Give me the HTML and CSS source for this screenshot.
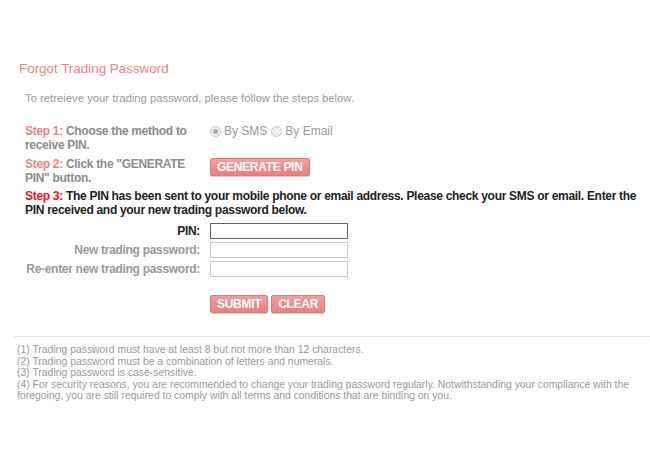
FILE: index.html
```html
<!DOCTYPE html>
<html>
<head>
<meta charset="utf-8">
<link rel="stylesheet" href="styles.css">
</head>
<body>
<div class="page">
  <h1 class="title">Forgot Trading Password</h1>
  <p class="intro">To retreieve your trading password, please follow the steps below.</p>
  <div class="steps">
    <div class="step-label"><span class="step-no">Step 1:</span> Choose the method to receive PIN.</div>
    <div class="step-ctl radios">
      <label class="radio"><span class="dot on"></span>By SMS</label>
      <label class="radio"><span class="dot"></span>By Email</label>
    </div>
    <div class="step-label"><span class="step-no">Step 2:</span> Click the "GENERATE PIN" button.</div>
    <div class="step-ctl"><button class="btn">GENERATE PIN</button></div>
  </div>
  <div class="step3"><span class="step3-no">Step 3:</span> The PIN has been sent to your mobile phone or email address. Please check your SMS or email. Enter the PIN received and your new trading password below.</div>
  <div class="form">
    <div class="flabel dark">PIN:</div>
    <div class="input active"></div>
    <div class="flabel">New trading password:</div>
    <div class="input"></div>
    <div class="flabel">Re-enter new trading password:</div>
    <div class="input"></div>
  </div>
  <div class="actions">
    <button class="btn">SUBMIT</button>
    <button class="btn">CLEAR</button>
  </div>
  <div class="notes">
    <div>(1) Trading password must have at least 8 but not more than 12 characters.</div>
    <div>(2) Trading password must be a combination of letters and numerals.</div>
    <div>(3) Trading password is case-sensitive.</div>
    <div>(4) For security reasons, you are recommended to change your trading password regularly. Notwithstanding your compliance with the foregoing, you are still required to comply with all terms and conditions that are binding on you.</div>
  </div>
</div>
</body>
</html>
```

FILE: styles.css
```css
html, body {
  margin: 0;
  padding: 0;
  background: #fff;
  font-family: "Liberation Sans", Arial, sans-serif;
}
.page {
  padding: 61px 0 0 0;
}
.title {
  margin: 0 0 0 19px;
  font-size: 13.4px;
  font-weight: normal;
  color: #f07f86;
  line-height: 16px;
}
.intro {
  margin: 14px 0 0 25px;
  font-size: 11.3px;
  color: #999;
  line-height: 14px;
}
.steps {
  margin: 19px 0 0 25px;
  display: grid;
  grid-template-columns: 185px auto;
  row-gap: 5px;
}
.step-label {
  font-size: 12px;
  font-weight: bold;
  letter-spacing: -0.3px;
  color: #8c8c8c;
  line-height: 14px;
  width: 170px;
}
.step-no {
  color: #f08088;
}
.radios {
  display: flex;
  align-items: flex-start;
  gap: 4px;
  font-size: 12px;
  color: #999;
  line-height: 14px;
}
.radio {
  display: flex;
  align-items: center;
  gap: 3px;
  height: 14px;
}
.dot {
  width: 11px;
  height: 11px;
  border-radius: 50%;
  border: 1px solid #c8c8c8;
  background: #f0f0f0;
  box-sizing: border-box;
  position: relative;
}
.dot.on::after {
  content: "";
  position: absolute;
  left: 2px;
  top: 2px;
  width: 5px;
  height: 5px;
  border-radius: 50%;
  background: #aaa;
}
.btn {
  font-family: "Liberation Sans", Arial, sans-serif;
  font-size: 12px;
  font-weight: bold;
  letter-spacing: -0.3px;
  color: #fff;
  background: linear-gradient(#f49c9c, #ec8080);
  border: 1px solid #e07a7a;
  border-radius: 2px;
  box-shadow: 0 1px 1px rgba(0,0,0,0.2);
  padding: 0 6px;
  height: 18px;
  line-height: 16px;
  margin: 0;
}
.step3 {
  margin: 4px 5px 0 25px;
  font-size: 12px;
  font-weight: bold;
  letter-spacing: -0.3px;
  color: #222;
  line-height: 14px;
}
.step3-no {
  color: #e8101c;
}
.form {
  margin: 6px 0 0 25px;
  display: grid;
  grid-template-columns: 175px 138px;
  column-gap: 10px;
  row-gap: 3px;
  align-items: center;
}
.flabel {
  text-align: right;
  font-size: 12px;
  font-weight: bold;
  letter-spacing: -0.3px;
  color: #999;
  line-height: 14px;
  white-space: nowrap;
}
.flabel.dark {
  color: #222;
}
.input {
  height: 16px;
  box-sizing: border-box;
  border: 1px solid #c8c8c8;
  background: #fff;
}
.input.active {
  border-color: #666;
}
.actions {
  margin: 18px 0 0 210px;
  display: flex;
  gap: 3px;
}
.notes {
  margin: 23px 0 0 15px;
  border-top: 1px dotted #ccc;
  padding: 7px 0 0 2px;
  font-size: 10.4px;
  color: #999;
  line-height: 11.5px;
}
```
